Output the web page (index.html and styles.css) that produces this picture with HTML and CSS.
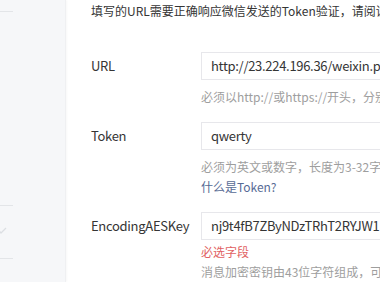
FILE: index.html
```html
<!DOCTYPE html>
<html>
	<head>
		<meta charset="UTF-8">
		<title>服务器配置</title>
		<link rel="stylesheet" href="styles.css">
	</head>
	<body>
		<div class="page">
			<div class="sidebar">
				<div class="menu-line line-top"></div>
				<div class="menu-line line-mid"></div>
				<svg class="menu-arrow" width="8" height="8" viewBox="0 0 8 8">
					<polyline points="-2,2 1,6 6,1" fill="none" stroke="#dcdfe3" stroke-width="1.2"/>
				</svg>
				<div class="menu-line line-bottom"></div>
			</div>

			<div class="main">
				<p class="intro">填写的URL需要正确响应微信发送的Token验证，请阅读<a href="#">消息接口使用指南</a>。</p>

				<div class="form">
					<div class="form-row">
						<label class="form-label">URL</label>
						<div class="form-control">
							<div class="input-box">http://23.224.196.36/weixin.php</div>
							<p class="hint">必须以http://或https://开头，分别支持80端口和443端口。</p>
						</div>
					</div>

					<div class="form-row">
						<label class="form-label">Token</label>
						<div class="form-control">
							<div class="input-box">qwerty</div>
							<p class="hint">必须为英文或数字，长度为3-32字符。</p>
							<a class="hint-link" href="#">什么是Token?</a>
						</div>
					</div>

					<div class="form-row">
						<label class="form-label">EncodingAESKey</label>
						<div class="form-control">
							<div class="input-box">nj9t4fB7ZByNDzTRhT2RYJW1mQ8kXvLp3cG5sE0aHuq</div>
							<p class="error">必选字段</p>
							<p class="hint hint-tight">消息加密密钥由43位字符组成，可随机修改，字符范围为A-Z，a-z，0-9。</p>
						</div>
					</div>
				</div>
			</div>
		</div>
	</body>
</html>
```

FILE: styles.css
```css
* {
	box-sizing: border-box;
	margin: 0;
	padding: 0;
}
body, html {
	height: 100%;
	background: #fff;
	overflow: hidden;
}
body {
	font-family: "Noto Sans CJK SC", sans-serif;
	color: #353535;
	font-size: 12px;
}
.page {
	display: flex;
	height: 100%;
	width: 760px;
}
.sidebar {
	width: 66px;
	flex-shrink: 0;
	background: #f6f7f9;
	border-right: 1px solid #eff0f2;
	box-shadow: 1px 0 2px rgba(0, 0, 0, 0.03);
	display: flex;
	flex-direction: column;
}
.menu-line {
	width: 13px;
	height: 1px;
	background: #e3e5e8;
}
.line-top {
	margin-top: 11px;
}
.line-mid {
	margin-top: 193px;
}
.menu-arrow {
	margin-top: 21px;
	display: block;
}
.line-bottom {
	margin-top: 23px;
}
.main {
	flex: 1;
	padding-left: 25px;
	white-space: nowrap;
}
.intro {
	margin-top: 1px;
	line-height: 20px;
	font-size: 12px;
}
.intro a {
	color: #576b95;
	text-decoration: none;
}
.form {
	margin-top: 31px;
}
.form-row {
	display: flex;
	align-items: flex-start;
	margin-bottom: 15px;
}
.form-label {
	width: 110px;
	line-height: 28px;
	font-size: 13px;
	letter-spacing: -0.3px;
}
.form-control {
	width: 420px;
}
.input-box {
	height: 28px;
	line-height: 26px;
	border: 1px solid #e7e7eb;
	padding: 0 9px;
	font-size: 13px;
	letter-spacing: -0.3px;
	overflow: hidden;
}
.hint {
	margin-top: 7px;
	line-height: 20px;
	color: #9e9e9e;
	font-size: 12px;
}
.hint-tight {
	margin-top: 0;
}
.hint-link {
	display: block;
	line-height: 20px;
	color: #576b95;
	text-decoration: none;
	font-size: 12px;
}
.error {
	margin-top: 2px;
	line-height: 20px;
	color: #e15f63;
	font-size: 12px;
}
```
